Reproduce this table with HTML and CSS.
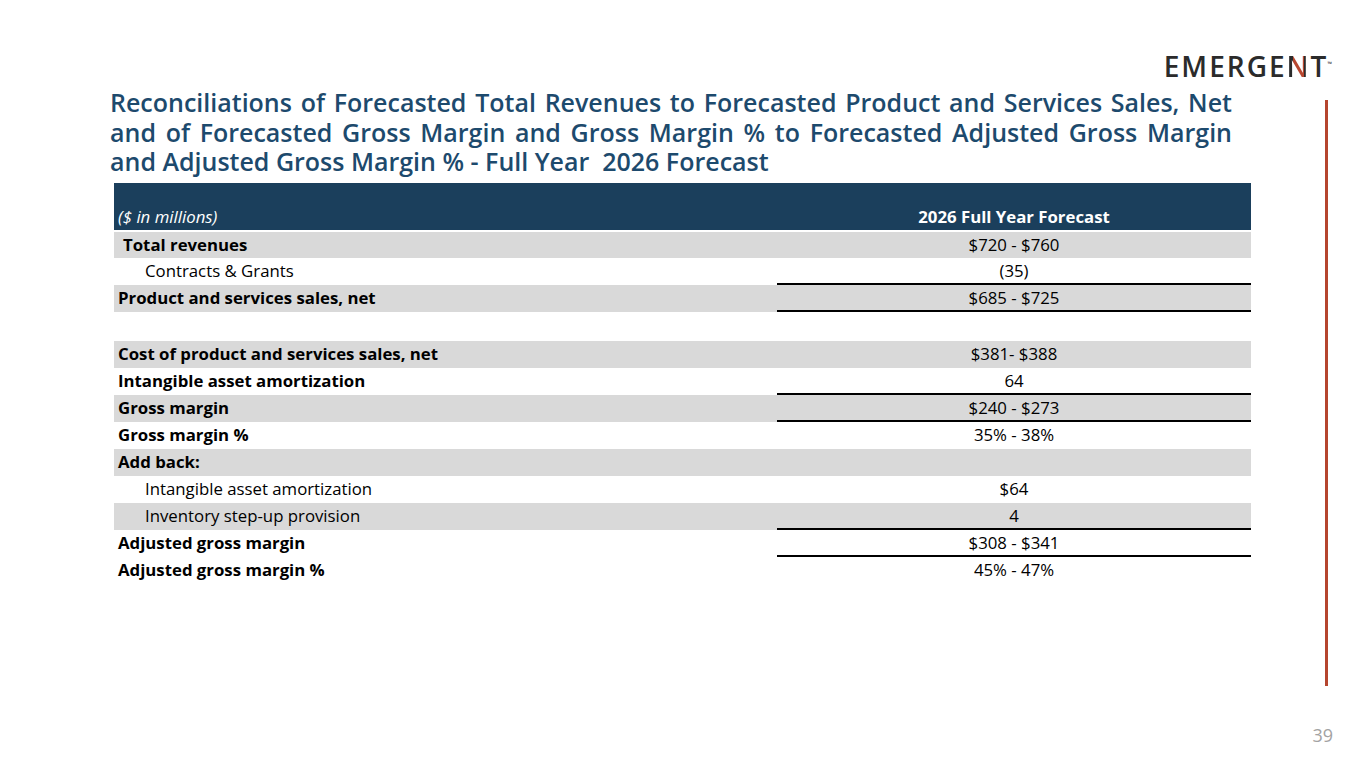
FILE: index.html
```html
<!DOCTYPE html>
<html lang="en">
<head>
<meta charset="utf-8">
<title>Reconciliations - Full Year 2026 Forecast</title>
<link rel="stylesheet" href="styles.css">
</head>
<body>
<div class="slide">
  <header class="topbar">
    <div class="logo">EMERGE<span class="logo-n">N</span>T<sup class="tm">™</sup></div>
  </header>
  <div class="body">
    <main class="content">
      <h1 class="title">
        <span class="tline just">Reconciliations of Forecasted Total Revenues to Forecasted Product and Services Sales, Net</span>
        <span class="tline just">and of Forecasted Gross Margin and Gross Margin % to Forecasted Adjusted Gross Margin</span>
        <span class="tline">and Adjusted Gross Margin % - Full Year&nbsp; 2026 Forecast</span>
      </h1>
      <table class="recon">
        <colgroup><col class="c-label"><col class="c-val"></colgroup>
        <thead>
          <tr>
            <th class="h-label">($ in millions)</th>
            <th class="h-val">2026 Full Year Forecast</th>
          </tr>
        </thead>
        <tbody>
          <tr class="shade"><td class="b lead">Total revenues</td><td class="v">$720 - $760</td></tr>
          <tr><td class="ind">Contracts &amp; Grants</td><td class="v rule">(35)</td></tr>
          <tr class="shade"><td class="b">Product and services sales, net</td><td class="v rule">$685 - $725</td></tr>
          <tr class="blank"><td></td><td class="v"></td></tr>
          <tr class="shade"><td class="b">Cost of product and services sales, net</td><td class="v">$381- $388</td></tr>
          <tr><td class="b">Intangible asset amortization</td><td class="v rule">64</td></tr>
          <tr class="shade"><td class="b">Gross margin</td><td class="v rule">$240 - $273</td></tr>
          <tr><td class="b">Gross margin %</td><td class="v">35% - 38%</td></tr>
          <tr class="shade"><td class="b">Add back:</td><td class="v"></td></tr>
          <tr><td class="ind">Intangible asset amortization</td><td class="v">$64</td></tr>
          <tr class="shade"><td class="ind">Inventory step-up provision</td><td class="v rule">4</td></tr>
          <tr><td class="b">Adjusted gross margin</td><td class="v rule">$308 - $341</td></tr>
          <tr><td class="b">Adjusted gross margin %</td><td class="v">45% - 47%</td></tr>
        </tbody>
      </table>
    </main>
    <div class="accent"></div>
  </div>
  <footer class="footer"><span class="pageno">39</span></footer>
</div>
</body>
</html>
```
FILE: styles.css
```css
* { box-sizing: border-box; }
html, body { margin: 0; padding: 0; background: #ffffff; }
body { font-family: "Open Sans", "Liberation Sans", sans-serif; color: #111; }

.slide {
  width: 1365px;
  height: 768px;
  overflow: hidden;
  display: flex;
  flex-direction: column;
}

/* ---- logo ---- */
.topbar {
  display: flex;
  justify-content: flex-end;
  padding: 49px 33px 0 0;
  height: 82px;
}
.logo {
  font-family: "Open Sans", "Liberation Sans", sans-serif;
  font-weight: 600;
  font-size: 28px;
  line-height: 34px;
  letter-spacing: 2px;
  color: #2b2b2b;
  white-space: nowrap;
}
.logo-n {
  display: inline-block;
  background: linear-gradient(90deg, #2b2b2b 0 27%, #b8472f 27% 70%, #2b2b2b 70% 100%);
  -webkit-background-clip: text;
  background-clip: text;
  color: transparent;
}
.tm {
  font-size: 6px;
  letter-spacing: 0;
  vertical-align: top;
  position: relative;
  top: -2px;
  margin-left: -1px;
}

/* ---- body ---- */
.body {
  display: flex;
  align-items: flex-start;
  padding-left: 110px;
}
.content {
  width: 1141px;
  padding-top: 6px;
}
.title {
  margin: 0 19px 0 0;
  font-family: "Open Sans", "Liberation Sans", sans-serif;
  font-weight: 600;
  font-size: 25px;
  line-height: 29.5px;
  color: #1d4a6d;
}
.tline { display: block; white-space: nowrap; }
.tline.just { text-align: justify; text-align-last: justify; }

.accent {
  width: 3px;
  height: 586px;
  margin-left: 74px;
  margin-top: 18px;
  background: #b5452f;
}

/* ---- table ---- */
.recon {
  margin: 6px 0 0 4px;
  width: 1137px;
  border-collapse: collapse;
  border-spacing: 0;
  font-size: 16.8px;
  color: #000;
}
.c-label { width: 663px; }
.c-val { width: 474px; }
.recon thead th {
  background: #1b3f5c;
  color: #ffffff;
  height: 48px;
  vertical-align: bottom;
  padding: 0 0 3px 0;
  line-height: 20px;
  border-bottom: 2px solid #ffffff;
}
.h-label { text-align: left; font-style: italic; font-weight: 400; padding-left: 4px !important; }
.h-val { text-align: center; font-weight: 700; }

.recon td {
  height: 27px;
  padding: 0 0 0 4px;
  line-height: 20px;
  vertical-align: middle;
}
.recon tr.shade td { background: #d9d9d9; }
.recon tr.blank td { height: 29px; }
.recon td.b { font-weight: 700; }
.recon td.lead { padding-left: 9px; }
.recon td.ind { padding-left: 31px; font-weight: 400; }
.recon td.v { text-align: center; padding: 0; }
.recon td.rule { box-shadow: inset 0 -2px 0 #000; }

/* ---- footer ---- */
.footer {
  display: flex;
  justify-content: flex-end;
  padding-right: 32px;
  margin-top: auto;
  padding-bottom: 22px;
}
.pageno {
  font-size: 18px;
  line-height: 22px;
  color: #a3a3a3;
}
```
